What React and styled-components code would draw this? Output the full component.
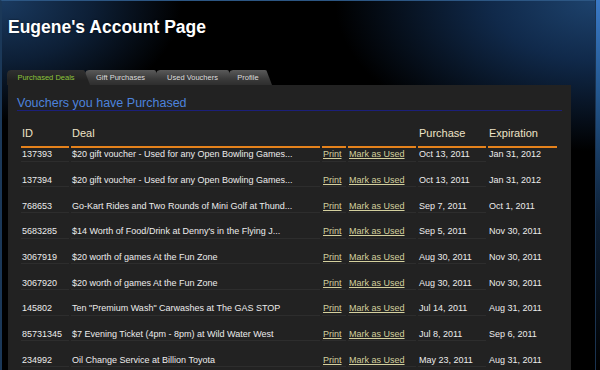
import React from "react";
import styled, { createGlobalStyle } from "styled-components";

const GlobalStyle = createGlobalStyle`
  html, body {
    margin: 0;
    padding: 0;
    background: #000;
    font-family: "Liberation Sans", Arial, sans-serif;
  }
`;

const tabs = [
  { label: "Purchased Deals", width: 83 },
  { label: "Gift Purchases", width: 76 },
  { label: "Used Vouchers", width: 78 },
  { label: "Profile", width: 43 },
];

const vouchers = [
  ["137393", "$20 gift voucher - Used for any Open Bowling Games...", "Oct 13, 2011", "Jan 31, 2012"],
  ["137394", "$20 gift voucher - Used for any Open Bowling Games...", "Oct 13, 2011", "Jan 31, 2012"],
  ["768653", "Go-Kart Rides and Two Rounds of Mini Golf at Thund...", "Sep 7, 2011", "Oct 1, 2011"],
  ["5683285", "$14 Worth of Food/Drink at Denny's in the Flying J...", "Sep 5, 2011", "Nov 30, 2011"],
  ["3067919", "$20 worth of games At the Fun Zone", "Aug 30, 2011", "Nov 30, 2011"],
  ["3067920", "$20 worth of games At the Fun Zone", "Aug 30, 2011", "Nov 30, 2011"],
  ["145802", "Ten \"Premium Wash\" Carwashes at The GAS STOP", "Jul 14, 2011", "Aug 31, 2011"],
  ["85731345", "$7 Evening Ticket (4pm - 8pm) at Wild Water West", "Jul 8, 2011", "Sep 6, 2011"],
  ["234992", "Oil Change Service at Billion Toyota", "May 23, 2011", "Aug 31, 2011"],
];

const App = () => {
  return (
    <>
      <GlobalStyle />
      <Page>
        <Frame>
          <Title>Eugene's Account Page</Title>
          <TabBar>
            {tabs.map((t, i) => (
              <Tab key={t.label} $active={i === 0} $w={t.width} $z={10 - i}>
                <span>{t.label}</span>
              </Tab>
            ))}
          </TabBar>
          <Panel>
            <Heading>Vouchers you have Purchased</Heading>
            <Table>
              <colgroup>
                <col style={{ width: 48 }} />
                <col style={{ width: 249 }} />
                <col style={{ width: 24 }} />
                <col style={{ width: 68 }} />
                <col style={{ width: 68 }} />
                <col style={{ width: 69 }} />
              </colgroup>
              <thead>
                <tr>
                  <th>ID</th>
                  <th>Deal</th>
                  <th></th>
                  <th></th>
                  <th>Purchase</th>
                  <th>Expiration</th>
                </tr>
              </thead>
              <tbody>
                {vouchers.map(([id, deal, bought, expires], i) => (
                  <Row key={id} $first={i === 0}>
                    <td>{id}</td>
                    <td>{deal}</td>
                    <td><Link href="#">Print</Link></td>
                    <td><Link href="#">Mark as Used</Link></td>
                    <td>{bought}</td>
                    <td className="exp">{expires}</td>
                  </Row>
                ))}
              </tbody>
            </Table>
          </Panel>
        </Frame>
        <Edge />
      </Page>
    </>
  );
};

const Page = styled.div`
  width: 600px;
  height: 370px;
  overflow: hidden;
  display: flex;
  background: #000;
`;

const Frame = styled.div`
  flex: 1;
  display: flex;
  flex-direction: column;
  padding: 16px 24px 0 6px;
  border-top: 1px solid #2c5683;
  border-left: 2px solid #1b3858;
  background:
    radial-gradient(ellipse 260px 150px at 100% 0%, #1d426c 0%, #10294a 40%, rgba(0, 0, 0, 0) 100%),
    radial-gradient(ellipse 180px 120px at 0% 0%, #1a3a60 0%, #0d1f36 50%, rgba(0, 0, 0, 0) 100%),
    #000;
`;

const Edge = styled.div`
  width: 4px;
  border-left: 1px solid #1a3350;
  background: linear-gradient(to bottom, #3a79c6 0%, #23578f 25%, #0d1e32 60%, #000 100%);
`;

const Title = styled.h1`
  margin: 0;
  font-size: 17.5px;
  line-height: 20px;
  font-weight: bold;
  color: #fff;
  text-shadow: 0 0 2px rgba(0, 0, 0, 0.6);
`;

const TabBar = styled.div`
  display: flex;
  margin: 33px 0 0 -1px;
  height: 15px;
`;

const Tab = styled.div`
  position: relative;
  z-index: ${(p) => p.$z};
  width: ${(p) => p.$w}px;
  margin-right: -5px;
  padding-right: 5px;
  box-sizing: border-box;
  display: flex;
  align-items: center;
  justify-content: center;
  font-size: 7.5px;
  color: ${(p) => (p.$active ? "#8cc43c" : "#dcdcdc")};
  background: ${(p) =>
    p.$active
      ? "linear-gradient(to bottom, #303030, #222 70%)"
      : "linear-gradient(to bottom, #595959, #3a3a3a 60%, #2e2e2e)"};
  clip-path: polygon(0 100%, 0 4px, 0.6px 2px, 1.5px 0.8px, 4px 0, calc(100% - 7px) 0, calc(100% - 5.5px) 0.6px, 100% 100%);
`;

const Panel = styled.div`
  flex: 1;
  background: #222;
  padding: 11px 9px 0 9px;
`;

const Heading = styled.h2`
  margin: 0;
  font-size: 12.5px;
  line-height: 14px;
  font-weight: normal;
  color: #4d82dc;
  border-bottom: 1px solid #1b1f7a;
`;

const Table = styled.table`
  table-layout: fixed;
  border-collapse: separate;
  border-spacing: 2px 0;
  width: 540px;
  margin: 16px 0 0 2px;
  th {
    text-align: left;
    font-weight: normal;
    font-size: 11px;
    line-height: 13px;
    color: #eee3c6;
    padding: 0 0 6px 1px;
    border-bottom: 2px solid #e5821c;
  }
`;

const Row = styled.tr`
  td {
    font-size: 9px;
    line-height: 11px;
    color: #ececec;
    white-space: nowrap;
    overflow: hidden;
    padding: ${(p) => (p.$first ? "1.2px 0 0.4px 1px" : "13.3px 0 0.4px 1px")};
    border-bottom: 1px solid #2d2d2d;
  }
  td.exp {
    border-bottom-color: transparent;
  }
`;

const Link = styled.a`
  color: #d4d09e;
  text-decoration: underline;
`;

export default App;
